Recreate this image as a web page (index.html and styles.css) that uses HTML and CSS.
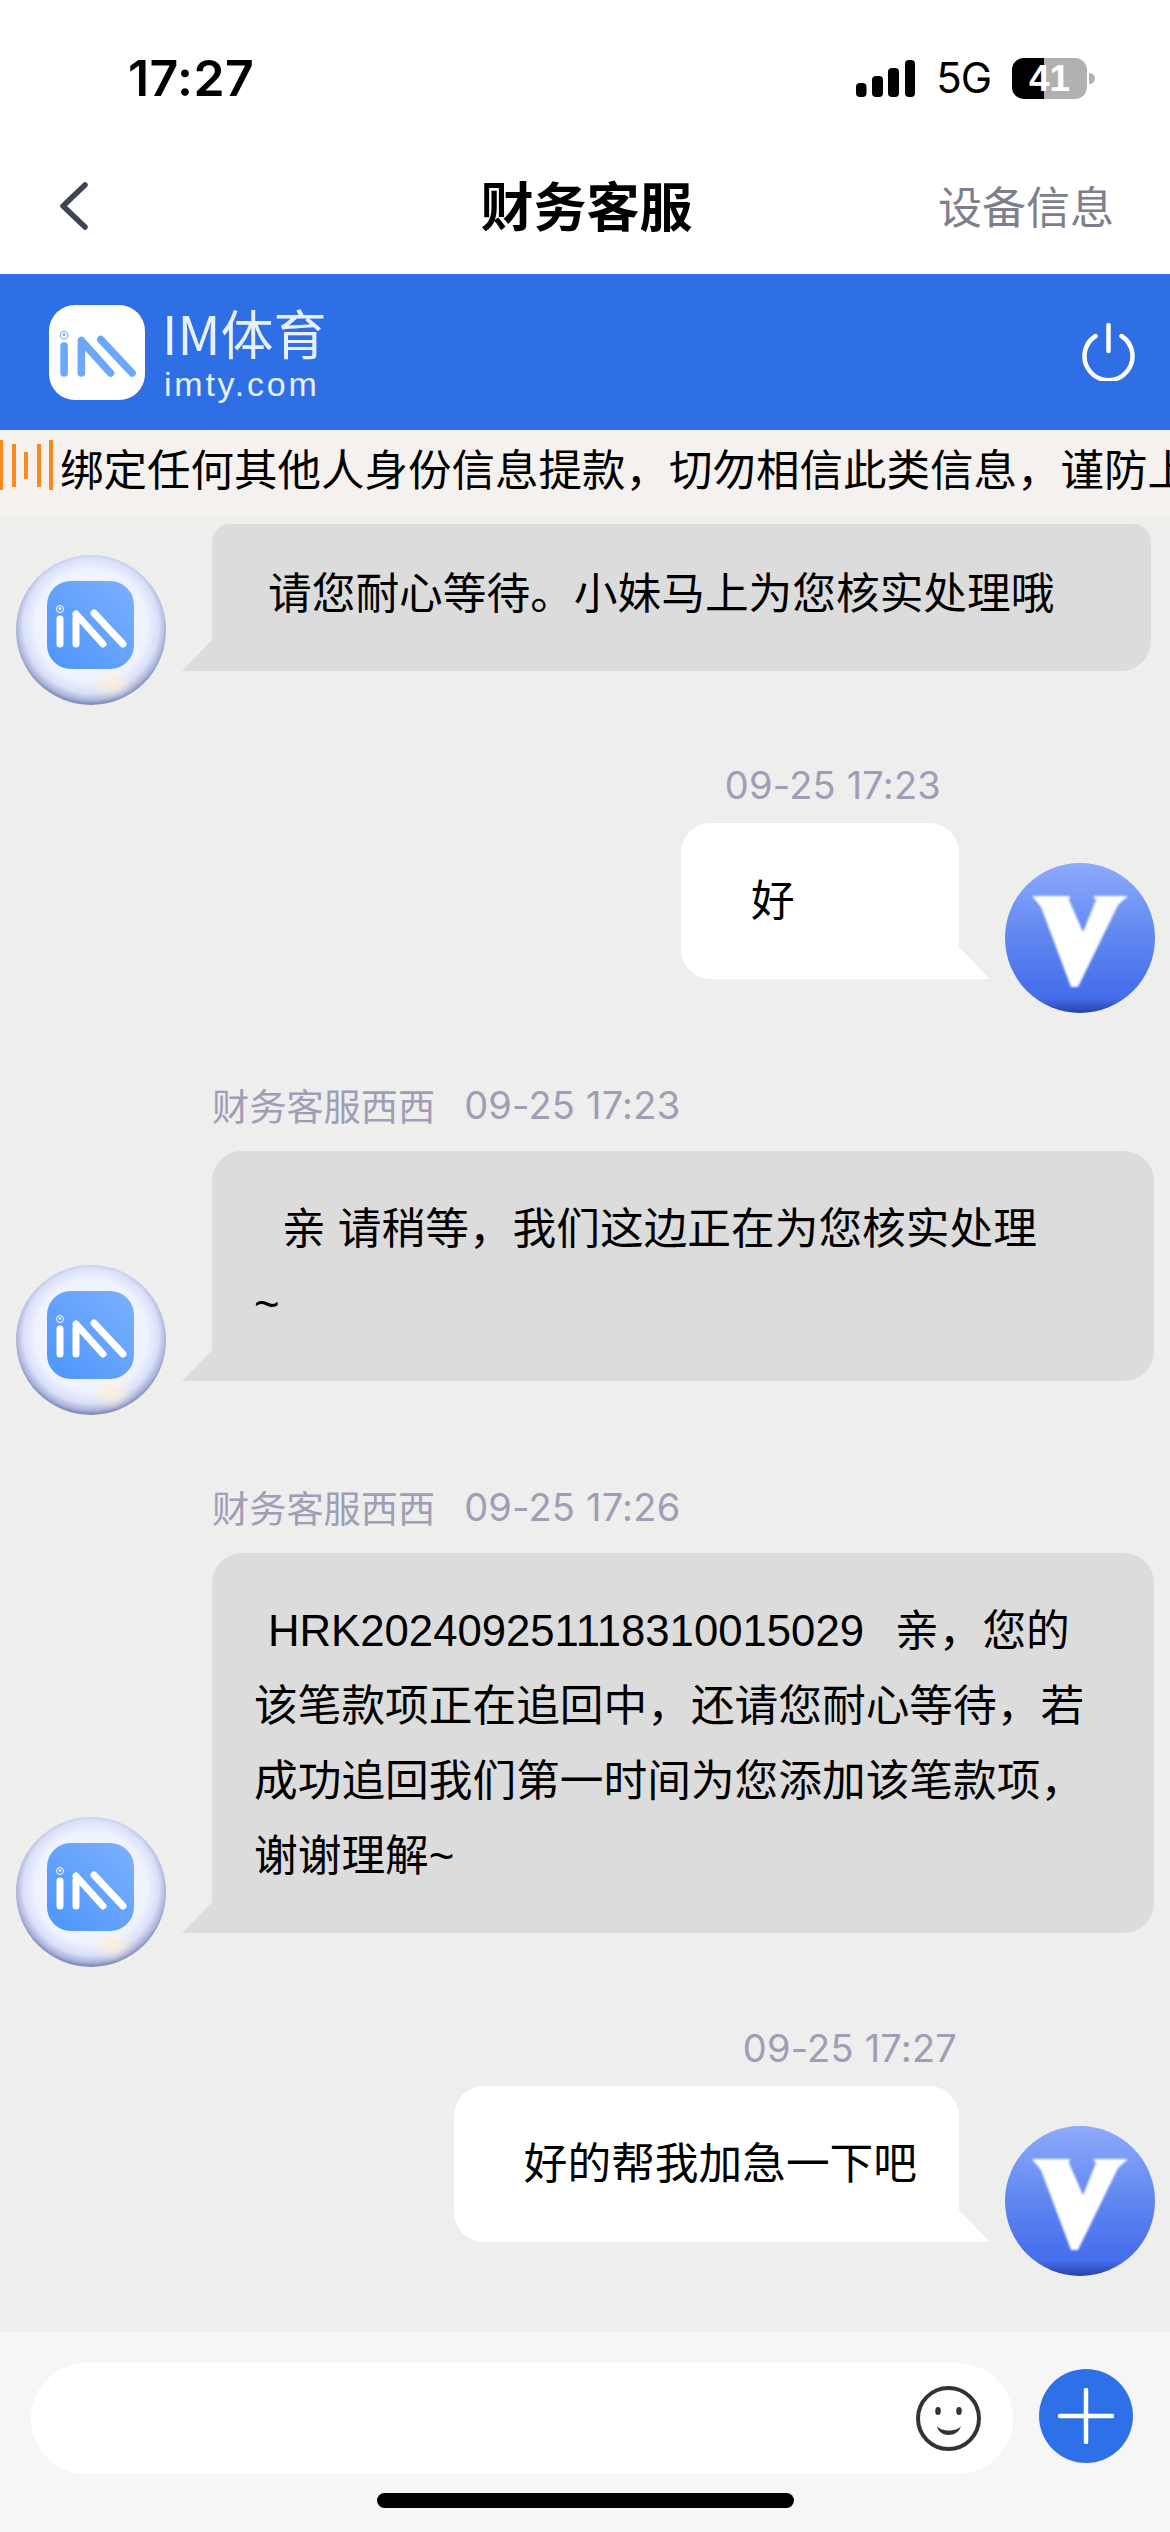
FILE: index.html
```html
<!DOCTYPE html>
<html lang="zh-CN">
<head>
<meta charset="utf-8">
<title>财务客服</title>
<link rel="stylesheet" href="styles.css">
</head>
<body>
<svg class="defs" aria-hidden="true">
  <defs>
    <radialGradient id="orb" cx="50%" cy="47%" r="52%">
      <stop offset="0" stop-color="#f6f8ff"/>
      <stop offset="0.72" stop-color="#eff3ff"/>
      <stop offset="0.87" stop-color="#d8dff8"/>
      <stop offset="0.96" stop-color="#aab3da"/>
      <stop offset="1" stop-color="#858fbd"/>
    </radialGradient>
    <linearGradient id="tile" x1="0" y1="1" x2="1" y2="0">
      <stop offset="0" stop-color="#4c95fb"/>
      <stop offset="1" stop-color="#7cb0fe"/>
    </linearGradient>
    <linearGradient id="ball" x1="0" y1="0" x2="0" y2="1">
      <stop offset="0" stop-color="#8daafc"/>
      <stop offset="0.5" stop-color="#5f86f0"/>
      <stop offset="0.9" stop-color="#456cec"/>
      <stop offset="1" stop-color="#2543ac"/>
    </linearGradient>
    <filter id="soft" x="-60%" y="-60%" width="220%" height="220%"><feGaussianBlur stdDeviation="6"/></filter>
    <filter id="edge" x="-10%" y="-10%" width="120%" height="120%"><feGaussianBlur stdDeviation="0.9"/></filter>
    <symbol id="im-mark" viewBox="0 0 87 88">
      <g fill="none" stroke="currentColor" stroke-width="7" stroke-linecap="round">
        <path d="M13 38V63"/>
        <path d="M29 37V63"/>
        <path d="M29 33L56 63"/>
        <path d="M47 32L76 63"/>
      </g>
      <circle cx="13" cy="28" r="3.500" fill="none" stroke="currentColor" stroke-width="1"/>
      <circle cx="13" cy="27.500" r="1.300" fill="currentColor"/>
    </symbol>
    <symbol id="agent-avatar" viewBox="0 0 150 150">
      <circle cx="75" cy="75" r="75" fill="url(#orb)"/>
      <ellipse cx="96" cy="128" rx="14" ry="9" fill="#ffeed9" filter="url(#soft)"/>
      <rect x="31" y="26" width="87" height="88" rx="24" fill="url(#tile)"/>
      <use href="#im-mark" x="31" y="26" width="87" height="88" color="#ffffff"/>
    </symbol>
    <symbol id="user-avatar" viewBox="0 0 150 150">
      <circle cx="75" cy="75" r="75" fill="url(#ball)"/>
      <path d="M27 33H65L64 37L78 69L91 37L88 33H123L113 42L73 124H66L36 44Z" fill="#ffffff" filter="url(#edge)"/>
    </symbol>
  </defs>
</svg>

<main class="screen">
  <div class="status">
    <span class="clock">17:27</span>
    <div class="status-right">
      <svg class="signal" viewBox="0 0 59 37" aria-hidden="true">
        <rect x="0" y="23" width="10.500" height="14" rx="4"/>
        <rect x="16" y="16" width="11" height="21" rx="4"/>
        <rect x="32" y="8" width="11" height="29" rx="4"/>
        <rect x="49" y="0" width="10" height="37" rx="4"/>
      </svg>
      <span class="net">5G</span>
      <div class="battery"><span class="battery-fill"></span><span class="battery-num">41</span></div>
    </div>
  </div>

  <nav class="nav">
    <svg class="back" viewBox="0 0 30 48" aria-hidden="true"><path d="M26 3L4 24L26 45"/></svg>
    <h1 class="title">财务客服</h1>
    <span class="nav-link">设备信息</span>
  </nav>

  <header class="brand">
    <div class="brand-logo">
      <div class="logo-tile"><svg class="logo-mark"><use href="#im-mark" color="#6ba8fb"/></svg></div>
      <div class="brand-text">
        <span class="brand-name">IM体育</span>
        <span class="brand-site">imty.com</span>
      </div>
    </div>
    <svg class="power" viewBox="0 0 56 58" aria-hidden="true">
      <path d="M15.500 13A24 24 0 1 0 41.500 13"/>
      <path d="M28.500 2V28"/>
    </svg>
  </header>

  <div class="notice">
    <div class="notice-bars"><i class="b1"></i><i class="b2"></i><i class="b3"></i><i class="b2"></i><i class="b1"></i></div>
    <p class="notice-text">绑定任何其他人身份信息提款，切勿相信此类信息，谨防上</p>
  </div>

  <section class="chat">
    <article class="msg in first">
      <div class="row">
        <svg class="avatar"><use href="#agent-avatar"/></svg>
        <div class="bubble clipped"><p class="indent-s">请您耐心等待。小妹马上为您核实处理哦</p></div>
      </div>
    </article>

    <article class="msg out">
      <div class="meta shifted">09-25 17:23</div>
      <div class="row">
        <div class="bubble short"><p class="indent-m">好</p></div>
        <svg class="avatar"><use href="#user-avatar"/></svg>
      </div>
    </article>

    <article class="msg in">
      <div class="meta"><span class="sender">财务客服西西</span><span>09-25 17:23</span></div>
      <div class="row">
        <svg class="avatar"><use href="#agent-avatar"/></svg>
        <div class="bubble"><p class="indent-m">亲 请稍等，我们这边正在为您核实处理<br>~</p></div>
      </div>
    </article>

    <article class="msg in">
      <div class="meta"><span class="sender">财务客服西西</span><span>09-25 17:26</span></div>
      <div class="row">
        <svg class="avatar"><use href="#agent-avatar"/></svg>
        <div class="bubble"><p class="indent-s">HRK202409251118310015029<span class="ref-gap"></span>亲，您的<br>该笔款项正在追回中，还请您耐心等待，若<br>成功追回我们第一时间为您添加该笔款项，<br>谢谢理解~</p></div>
      </div>
    </article>

    <article class="msg out">
      <div class="meta">09-25 17:27</div>
      <div class="row">
        <div class="bubble"><p class="indent-m">好的帮我加急一下吧</p></div>
        <svg class="avatar"><use href="#user-avatar"/></svg>
      </div>
    </article>
  </section>

  <footer class="composer">
    <div class="composer-row">
      <div class="field">
        <svg class="smile" viewBox="0 0 65 65" aria-hidden="true">
          <circle class="smile-face" cx="32.500" cy="32.500" r="30.500"/>
          <ellipse class="smile-eye" cx="22" cy="25" rx="2.800" ry="4"/>
          <ellipse class="smile-eye" cx="43" cy="25" rx="2.800" ry="4"/>
          <path class="smile-mouth" d="M21 40C23 52 42 52 45 40C41 46 25 46 21 40Z"/>
        </svg>
      </div>
      <div class="plus">
        <svg class="plus-icon" viewBox="0 0 56 56" aria-hidden="true"><path d="M28 2V54M2 28H54"/></svg>
      </div>
    </div>
    <div class="home-bar"></div>
  </footer>
</main>
</body>
</html>
```

FILE: styles.css
```css
* { box-sizing: border-box; }

html, body {
  margin: 0;
  padding: 0;
}

body {
  width: 1170px;
  height: 2532px;
  overflow: hidden;
  background: #eeeeec;
  font-family: "Liberation Sans", "Noto Sans CJK SC", sans-serif;
  color: #000;
}

.defs {
  position: absolute;
  width: 0;
  height: 0;
}

.screen {
  display: flex;
  flex-direction: column;
  height: 2532px;
}

/* status bar */
.status {
  display: flex;
  justify-content: space-between;
  align-items: center;
  height: 106px;
  padding: 50px 83px 0 128px;
  background: #fff;
  flex: none;
}

.clock {
  font-family: "Inter", sans-serif;
  font-size: 50px;
  font-weight: 600;
  line-height: 56px;
  letter-spacing: 0.4px;
}

.status-right {
  display: flex;
  align-items: center;
  gap: 21px;
}

.signal {
  width: 59px;
  height: 37px;
  fill: #000;
}

.net {
  font-family: "Inter", sans-serif;
  font-size: 42px;
  line-height: 44px;
  letter-spacing: -1px;
}

.battery {
  position: relative;
  width: 75px;
  height: 41px;
  border-radius: 12px;
  background: #b1b1b1;
  display: flex;
  align-items: center;
  justify-content: center;
}

.battery::after {
  content: "";
  position: absolute;
  left: 77px;
  top: 15px;
  width: 6px;
  height: 11px;
  border-radius: 0 6px 6px 0;
  background: #b1b1b1;
}

.battery-fill {
  position: absolute;
  left: 0;
  top: 0;
  bottom: 0;
  width: 32px;
  border-radius: 12px 0 0 12px;
  background: #000;
}

.battery-num {
  position: relative;
  color: #fff;
  font-size: 37px;
  font-weight: 700;
  line-height: 41px;
}

/* nav */
.nav {
  display: grid;
  grid-template-columns: 1fr auto 1fr;
  align-items: center;
  height: 168px;
  padding: 32px 56px 0 59px;
  background: #fff;
  flex: none;
}

.back {
  width: 30px;
  height: 48px;
  fill: none;
  stroke: #3f4453;
  stroke-width: 5.500;
  stroke-linecap: round;
  stroke-linejoin: round;
}

.title {
  margin: -5px 0 0;
  font-family: "Noto Sans CJK SC", sans-serif;
  font-size: 53px;
  font-weight: 700;
  line-height: 60px;
}

.nav-link {
  justify-self: end;
  margin-top: -2px;
  font-family: "Noto Sans CJK SC", sans-serif;
  font-size: 44px;
  line-height: 56px;
  color: #7d808c;
}

/* brand header */
.brand {
  display: flex;
  justify-content: space-between;
  align-items: center;
  height: 156px;
  padding: 0 34px 0 49px;
  background: #2e6fe6;
  flex: none;
}

.brand-logo {
  display: flex;
  align-items: center;
  gap: 17px;
}

.logo-tile {
  width: 96px;
  height: 95px;
  border-radius: 26px;
  background: #fff;
}

.logo-mark {
  display: block;
  width: 96px;
  height: 95px;
}

.brand-text {
  display: flex;
  flex-direction: column;
  padding-top: 6px;
  color: #e9f0fd;
}

.brand-name {
  font-family: "Noto Sans CJK SC", sans-serif;
  font-size: 53px;
  line-height: 52px;
}

.brand-site {
  margin-top: 6px;
  padding-left: 2px;
  font-size: 34px;
  line-height: 40px;
  letter-spacing: 2.750px;
}

.power {
  width: 56px;
  height: 58px;
  fill: none;
  stroke: #fff;
  stroke-width: 4.500;
  stroke-linecap: round;
}

/* notice */
.notice {
  display: flex;
  align-items: flex-start;
  height: 87px;
  padding-top: 10px;
  background: #f4f1ee;
  overflow: hidden;
  flex: none;
}

.notice-bars {
  display: flex;
  align-items: center;
  gap: 8.500px;
  width: 61px;
  height: 50px;
  flex: none;
  margin-left: -1px;
}

.notice-bars i {
  display: block;
  width: 4px;
  background: #f98a22;
}

.notice-bars .b1 { height: 50px; }
.notice-bars .b2 { height: 43px; }
.notice-bars .b3 { height: 27px; }

.notice-text {
  margin: 3px 0 0;
  font-family: "Noto Sans CJK SC", sans-serif;
  font-size: 43.500px;
  line-height: 50px;
  white-space: nowrap;
}

/* chat */
.chat {
  flex: 1;
  min-height: 0;
  overflow: hidden;
  display: flex;
  flex-direction: column;
  padding-top: 7px;
}

.msg { flex: none; }

.msg.in { margin-top: 70px; }
.msg.out { margin-top: 58px; }
.msg.out:last-child { margin-top: 59px; }
.msg.first { margin-top: 0; }

.meta {
  display: flex;
  gap: 29px;
  font-family: "Inter", "Noto Sans CJK SC", sans-serif;
  font-size: 38px;
  letter-spacing: 0.2px;
  line-height: 44px;
  color: #a09db6;
}

.msg.in .meta {
  padding-left: 212px;
  margin-bottom: 24px;
}

.msg.out .meta {
  justify-content: flex-end;
  padding-right: 213px;
  margin-bottom: 16px;
}

.msg.out .meta.shifted { padding-right: 229px; }

.sender {
  font-family: "Noto Sans CJK SC", sans-serif;
  font-size: 37.200px;
  letter-spacing: 0;
}

.row {
  display: flex;
  align-items: flex-end;
  gap: 46px;
}

.msg.in .row { padding-left: 16px; }
.msg.out .row { justify-content: flex-end; padding-right: 15px; }

.avatar {
  display: block;
  width: 150px;
  height: 150px;
  flex: none;
}

.bubble {
  position: relative;
  padding: 40px 42px;
  margin-bottom: 34px;
  font-size: 43.700px;
  line-height: 75px;
}

.bubble p {
  margin: 0;
  white-space: nowrap;
}

.ref-gap {
  display: inline-block;
  width: 31px;
}

.msg.in .bubble {
  width: 942px;
  background: #dcdcdc;
  border-radius: 30px 30px 30px 0;
}

.msg.in .bubble.clipped {
  width: 939px;
  padding-top: 32px;
  border-radius: 18px 18px 30px 0;
}

.msg.out .bubble {
  padding-bottom: 41px;
  background: #fff;
  border-radius: 30px 30px 0 30px;
}

.msg.out .bubble.short { min-width: 278px; }

.bubble::after {
  content: "";
  position: absolute;
  bottom: 0;
  width: 31px;
  height: 32px;
}

.msg.in .bubble::after {
  left: -30px;
  background: #dcdcdc;
  clip-path: polygon(100% 0, 100% 100%, 0 100%);
}

.msg.out .bubble::after {
  right: -31px;
  background: #fff;
  clip-path: polygon(0 0, 100% 100%, 0 100%);
}

.indent-s { text-indent: 14px; }
.indent-m { text-indent: 28px; }

/* composer */
.composer {
  height: 200px;
  padding-top: 31px;
  background: #f6f6f6;
  flex: none;
  display: flex;
  flex-direction: column;
}

.composer-row {
  display: flex;
  align-items: flex-start;
  gap: 26px;
  padding-left: 31px;
}

.field {
  display: flex;
  align-items: center;
  justify-content: flex-end;
  width: 982px;
  height: 111px;
  padding-right: 32px;
  border-radius: 56px;
  background: #fff;
}

.smile {
  width: 65px;
  height: 65px;
}

.smile-face {
  fill: none;
  stroke: #333;
  stroke-width: 4;
}

.smile-eye, .smile-mouth { fill: #333; }

.plus {
  display: flex;
  align-items: center;
  justify-content: center;
  width: 94px;
  height: 94px;
  margin-top: 6px;
  border-radius: 50%;
  background: #2e70e8;
}

.plus-icon {
  width: 56px;
  height: 56px;
  fill: none;
  stroke: #fff;
  stroke-width: 4.500;
  stroke-linecap: round;
}

.home-bar {
  width: 417px;
  height: 15px;
  margin: 19px 0 0 377px;
  border-radius: 8px;
  background: #000;
}
```
